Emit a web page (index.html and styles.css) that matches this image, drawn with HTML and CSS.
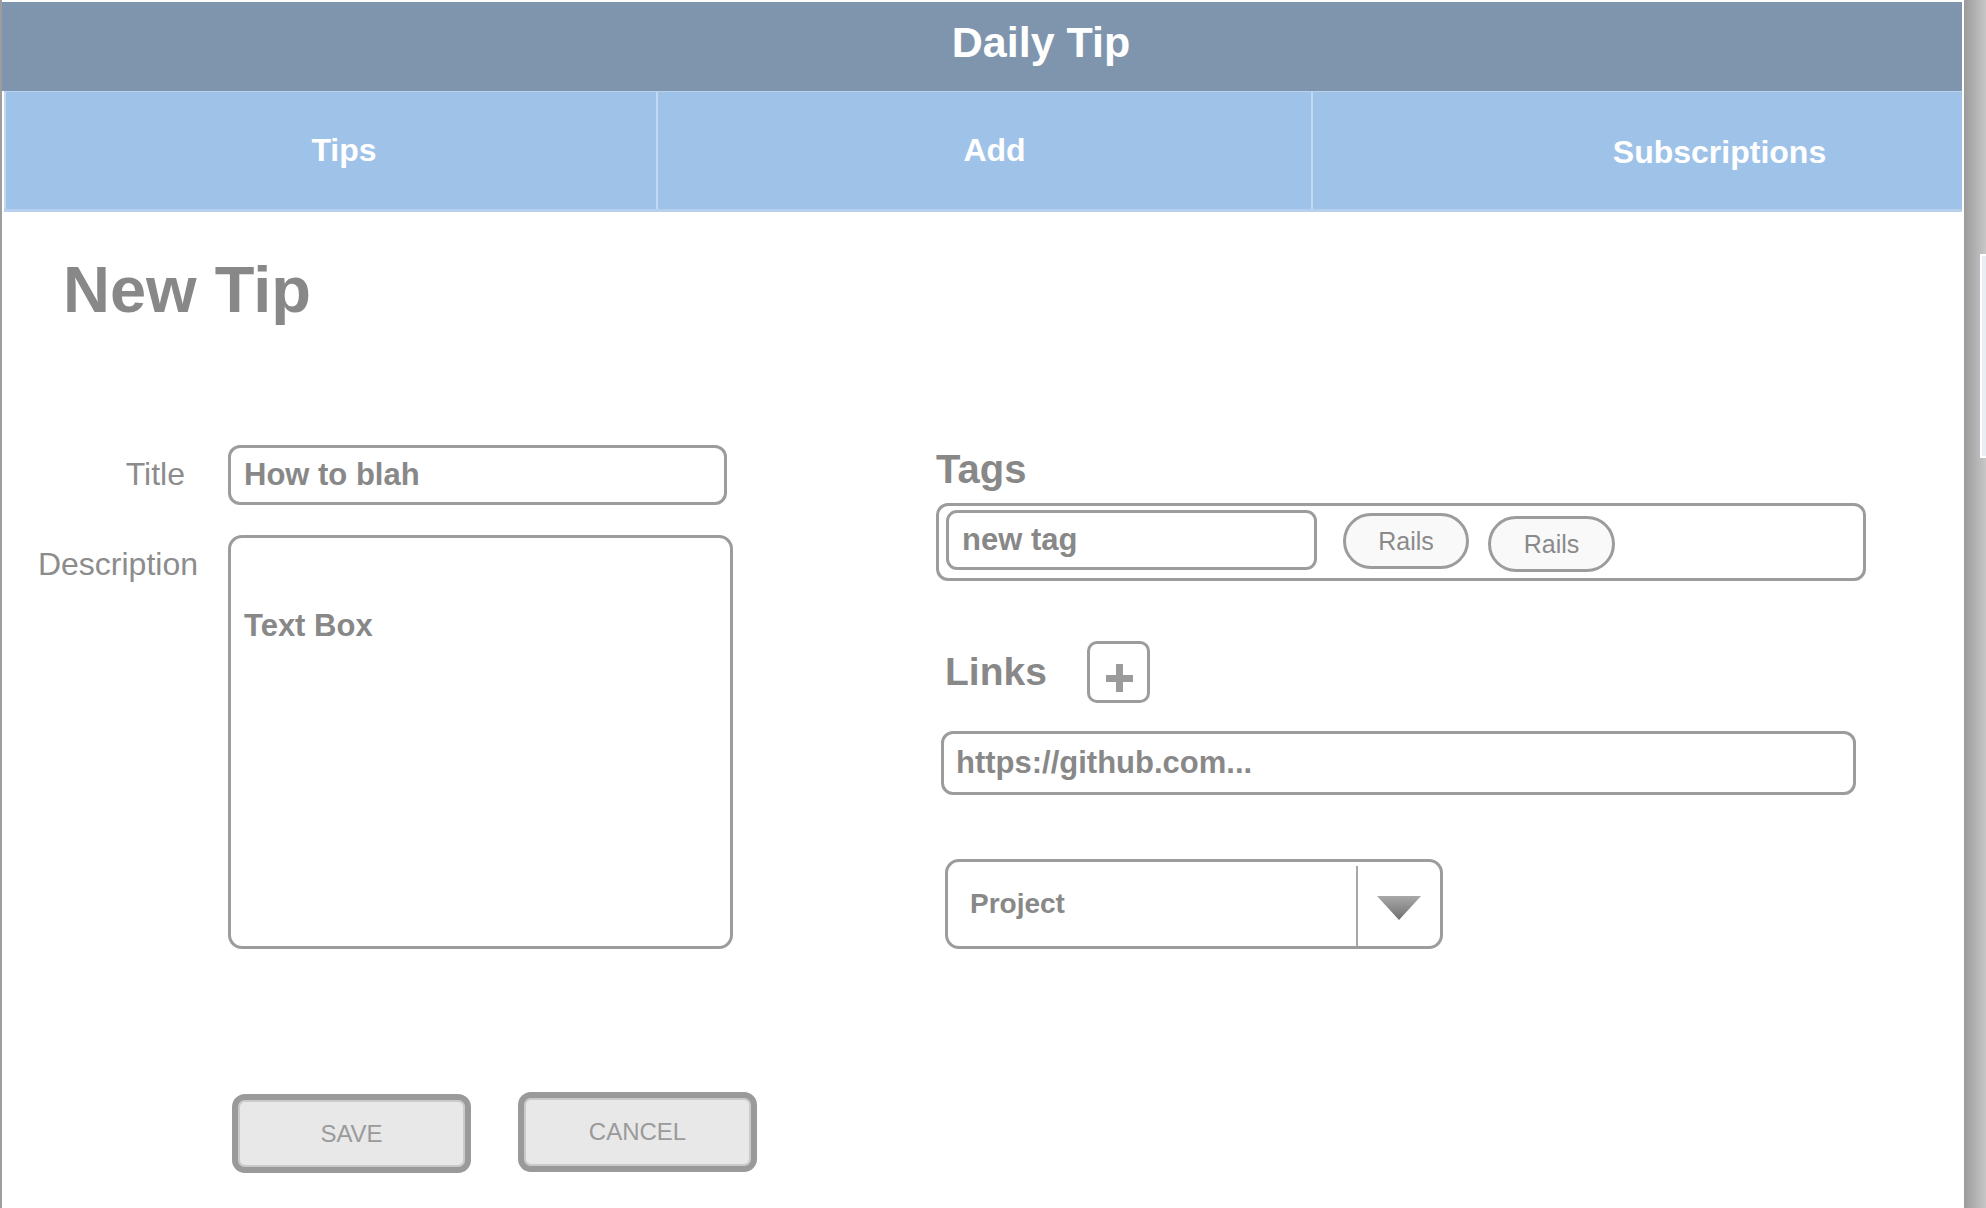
FILE: index.html
```html
<!DOCTYPE html>
<html lang="en">
<head>
<meta charset="utf-8">
<title>Daily Tip - New Tip</title>
<link rel="stylesheet" href="styles.css">
</head>
<body>
<div class="window">
  <div class="frame">
    <header class="topbar">Daily Tip</header>
    <nav class="tabs">
      <div class="tab tab-tips">Tips</div>
      <div class="tab tab-add">Add</div>
      <div class="tab tab-subs">Subscriptions</div>
    </nav>
    <main class="content">
      <h1 class="page-title">New Tip</h1>
      <div class="form">
        <div class="left">
          <div class="field-row">
            <div class="label label-title">Title</div>
            <div class="input input-title">How to blah</div>
          </div>
          <div class="field-row row-desc">
            <div class="label label-desc">Description</div>
            <div class="textbox">Text Box</div>
          </div>
          <div class="actions">
            <div class="btn btn-save">SAVE</div>
            <div class="btn btn-cancel">CANCEL</div>
          </div>
        </div>
        <div class="right">
          <h2 class="section-title title-tags">Tags</h2>
          <div class="tags-box">
            <div class="input input-tag">new tag</div>
            <div class="pill pill-1">Rails</div>
            <div class="pill pill-2">Rails</div>
          </div>
          <div class="links-row">
            <h2 class="section-title">Links</h2>
            <div class="add-btn">
              <svg width="57" height="56" viewBox="0 0 57 56">
                <rect x="16" y="31" width="27" height="7" fill="#9b9b9b"/>
                <rect x="26" y="20" width="7" height="28" fill="#9b9b9b"/>
              </svg>
            </div>
          </div>
          <div class="input input-url">https://github.com...</div>
          <div class="select">
            <div class="select-value">Project</div>
            <div class="select-divider"></div>
            <div class="select-arrow">
              <svg width="44" height="24" viewBox="0 0 44 24">
                <defs>
                  <linearGradient id="tri" x1="0" y1="0" x2="0" y2="1">
                    <stop offset="0" stop-color="#a9a9a9"/>
                    <stop offset="1" stop-color="#6f6f6f"/>
                  </linearGradient>
                </defs>
                <polygon points="0,0 44,0 22,24" fill="url(#tri)"/>
              </svg>
            </div>
          </div>
        </div>
      </div>
    </main>
  </div>
  <div class="scrollbar">
    <div class="thumb"></div>
  </div>
</div>
</body>
</html>
```

FILE: styles.css
```css
html, body {
  margin: 0;
  padding: 0;
  background: #ffffff;
}

body {
  font-family: "Liberation Sans", Arial, Helvetica, sans-serif;
  color: #8a8a8a;
}

.window {
  display: flex;
  width: 1986px;
  height: 1208px;
  overflow: hidden;
}

.frame {
  width: 1962px;
  border-left: 2px solid #9d9d9d;
  background: #ffffff;
  display: flex;
  flex-direction: column;
}

.topbar {
  margin-top: 2px;
  width: 1960px;
  height: 89px;
  box-sizing: border-box;
  background: #7f95ae;
  color: #ffffff;
  font-weight: bold;
  font-size: 43px;
  line-height: 80px;
  text-align: center;
  padding-left: 118px;
}

.tabs {
  display: grid;
  grid-template-columns: 652px 655px 1fr;
  margin-left: 2px;
  height: 121px;
  box-sizing: border-box;
  border-top: 1px solid #b9d2ee;
  border-bottom: 3px solid #b6d0ee;
  background: #9fc3e8;
}

.tab {
  display: flex;
  align-items: center;
  justify-content: center;
  color: #ffffff;
  font-weight: bold;
  font-size: 32px;
  box-sizing: border-box;
  border-left: 2px solid #c3d9f1;
}

.tab-tips { padding-left: 26px; }
.tab-add { padding-left: 20px; }
.tab-subs { padding-left: 164px; padding-top: 4px; }

.content {
  padding-top: 46px;
}

.page-title {
  margin: 0 0 0 61px;
  font-size: 65px;
  line-height: 64px;
  font-weight: bold;
  color: #888888;
}

.form {
  margin-top: 123px;
  display: grid;
  grid-template-columns: 755px 930px;
  column-gap: 179px;
  align-items: start;
}

.field-row {
  display: flex;
  align-items: flex-start;
}

.row-desc {
  margin-top: 30px;
}

.label {
  width: 226px;
  box-sizing: border-box;
  text-align: right;
  font-size: 32px;
  color: #8c8c8c;
}

.label-title {
  padding-right: 43px;
  line-height: 58px;
}

.label-desc {
  padding-right: 30px;
  line-height: 58px;
}

.input {
  box-sizing: border-box;
  border: 3px solid #9c9c9c;
  border-radius: 12px;
  font-weight: bold;
  font-size: 31px;
  color: #888888;
  background: #ffffff;
}

.input-title {
  width: 499px;
  height: 60px;
  line-height: 54px;
  padding-left: 13px;
}

.textbox {
  width: 505px;
  height: 414px;
  box-sizing: border-box;
  border: 3px solid #9c9c9c;
  border-radius: 14px;
  padding: 68px 13px 0;
  font-weight: bold;
  font-size: 31px;
  line-height: 40px;
  color: #888888;
}

.actions {
  display: flex;
  align-items: flex-start;
  gap: 47px;
  margin-top: 143px;
  padding-left: 230px;
}

.btn {
  width: 239px;
  height: 79px;
  box-sizing: border-box;
  border: 6px solid #9a9a9a;
  border-radius: 13px;
  box-shadow: inset 0 0 0 2px #cacaca;
  background: #e8e8e8;
  color: #9a9a9a;
  font-size: 24px;
  display: flex;
  align-items: center;
  justify-content: center;
}

.btn-save {
  margin-top: 2px;
}

.btn-cancel {
  height: 80px;
}

.right {
  display: flex;
  flex-direction: column;
  align-items: flex-start;
}

.section-title {
  margin: 0;
  font-size: 39px;
  line-height: 48px;
  font-weight: bold;
  color: #888888;
}

.title-tags {
  font-size: 40px;
}

.tags-box {
  margin-top: 10px;
  width: 930px;
  height: 78px;
  box-sizing: border-box;
  border: 3px solid #9c9c9c;
  border-radius: 12px;
  padding: 4px 7px;
  display: flex;
  align-items: flex-start;
}

.input-tag {
  width: 371px;
  height: 60px;
  line-height: 54px;
  padding-left: 13px;
  border-radius: 11px;
}

.pill {
  height: 56px;
  width: 126px;
  box-sizing: border-box;
  border: 3px solid #9c9c9c;
  border-radius: 28px;
  background: #f9f9f9;
  font-size: 25px;
  color: #8a8a8a;
  display: flex;
  align-items: center;
  justify-content: center;
}

.pill-1 {
  margin-left: 26px;
  margin-top: 3px;
}

.pill-2 {
  margin-left: 19px;
  margin-top: 6px;
  width: 127px;
}

.links-row {
  margin-top: 60px;
  padding-left: 9px;
  display: flex;
  align-items: center;
  gap: 40px;
}

.add-btn {
  width: 63px;
  height: 62px;
  box-sizing: border-box;
  border: 3px solid #9c9c9c;
  border-radius: 10px;
  display: flex;
}

.input-url {
  margin-top: 28px;
  margin-left: 5px;
  width: 915px;
  height: 64px;
  line-height: 58px;
  padding-left: 12px;
}

.select {
  margin-top: 64px;
  margin-left: 9px;
  width: 498px;
  height: 90px;
  box-sizing: border-box;
  border: 3px solid #9c9c9c;
  border-radius: 14px;
  display: flex;
}

.select-value {
  flex: 1;
  padding-left: 22px;
  font-weight: bold;
  font-size: 28px;
  line-height: 84px;
  color: #888888;
}

.select-divider {
  width: 2px;
  margin-top: 4px;
  background: #a8a8a8;
}

.select-arrow {
  width: 82px;
  display: flex;
  align-items: center;
  justify-content: center;
  padding-top: 7px;
  box-sizing: border-box;
}

.scrollbar {
  width: 22px;
  margin-left: 2px;
  background: linear-gradient(to right, #9b9b9b, #c7c7c7);
  display: flex;
  flex-direction: column;
  align-items: flex-end;
}

.thumb {
  margin-top: 254px;
  width: 6px;
  height: 204px;
  box-sizing: border-box;
  border: 2px solid #ffffff;
  border-right: none;
  background: #e9eef4;
}
```
